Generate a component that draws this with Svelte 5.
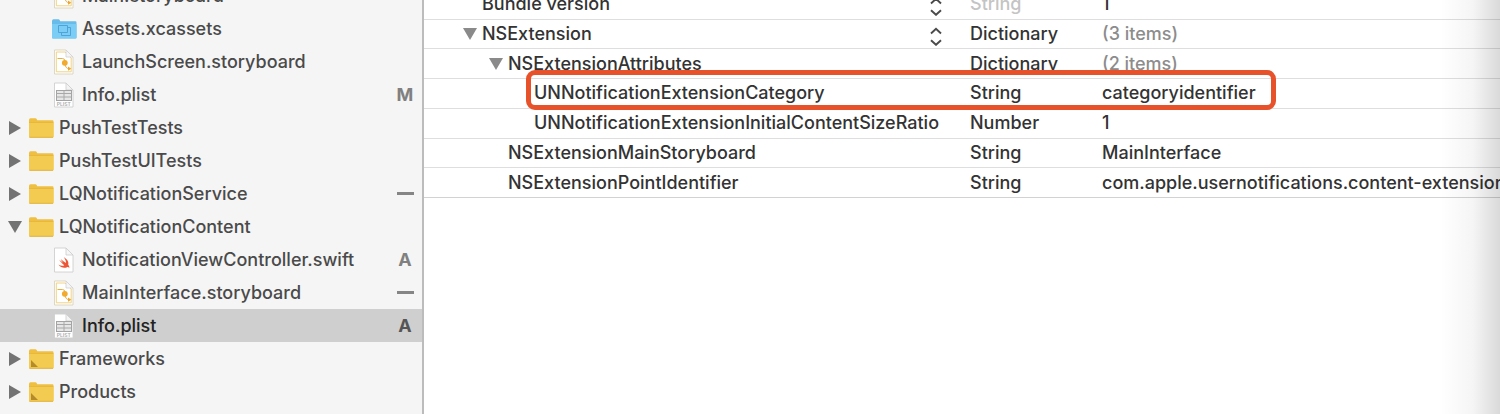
<script lang="ts">
  type FileKind = "storyboard" | "assets" | "plist" | "swift" | "folder" | "group";

  interface FileNode {
    name: string;
    kind: FileKind;
    status?: string;
    open?: boolean;
  }

  interface PlistRow {
    key: string;
    type: string;
    value: string;
    level: number;
    open?: boolean;
    stepper?: boolean;
    fixedType?: boolean;
  }

  let files: FileNode[] = [
    { name: "Main.storyboard", kind: "storyboard" },
    { name: "Assets.xcassets", kind: "assets" },
    { name: "LaunchScreen.storyboard", kind: "storyboard" },
    { name: "Info.plist", kind: "plist", status: "M" },
    { name: "PushTestTests", kind: "folder" },
    { name: "PushTestUITests", kind: "folder" },
    { name: "LQNotificationService", kind: "folder", status: "-" },
    { name: "LQNotificationContent", kind: "folder", open: true },
    { name: "NotificationViewController.swift", kind: "swift", status: "A" },
    { name: "MainInterface.storyboard", kind: "storyboard", status: "-" },
    { name: "Info.plist", kind: "plist", status: "A" },
    { name: "Frameworks", kind: "group" },
    { name: "Products", kind: "group" },
  ];

  let rows: PlistRow[] = [
    { key: "Bundle version", type: "String", value: "1", level: 0, stepper: true, fixedType: true },
    { key: "NSExtension", type: "Dictionary", value: "(3 items)", level: 0, open: true, stepper: true },
    { key: "NSExtensionAttributes", type: "Dictionary", value: "(2 items)", level: 1, open: true },
    { key: "UNNotificationExtensionCategory", type: "String", value: "categoryidentifier", level: 2 },
    { key: "UNNotificationExtensionInitialContentSizeRatio", type: "Number", value: "1", level: 2 },
    { key: "NSExtensionMainStoryboard", type: "String", value: "MainInterface", level: 1 },
    { key: "NSExtensionPointIdentifier", type: "String", value: "com.apple.usernotifications.content-extension", level: 1 },
  ];

  let selected = 10;

  const isFolder = (kind: FileKind) => kind === "folder" || kind === "group";
</script>

<div class="window">
  <nav class="sidebar" aria-label="Project navigator">
    <ul class="tree">
      {#each files as file, i}
        <li class="node" class:child={!isFolder(file.kind)} class:selected={i === selected}>
          {#if isFolder(file.kind)}
            <button type="button" class="disclosure" aria-label="Toggle {file.name}" aria-expanded={!!file.open}>
              <svg width="14" height="14" viewBox="0 0 14 14">
                <path d={file.open ? "M0 1H14L7 13Z" : "M1 0V14L13 7Z"} fill="#737373" />
              </svg>
            </button>
          {/if}

          <button type="button" class="file" on:click={() => (selected = i)}>
            {#if isFolder(file.kind)}
              <svg class="icon" width="26" height="24" viewBox="0 0 26 24">
                <path d="M1 4Q1 2.2 2.5 2.2H7.5Q8.7 2.2 9.2 4.2H24.5Q25.5 4.2 25.5 5.4V20.5Q25.5 21.5 24.5 21.5H2Q1 21.5 1 20.5Z" fill="#efbf3f" />
                <path d="M1 7H25.5V20.5Q25.5 21.5 24.5 21.5H2Q1 21.5 1 20.5Z" fill="#f3cb50" />
                <path d="M1 6.5H25.5" stroke="#e8b53c" stroke-width="0.8" />
                <path d="M1.5 21.3H25" stroke="#dcae3e" stroke-width="0.8" />
                {#if file.kind === "group"}
                  <path d="M3 13L10 20H3Z" fill="#b58a2a" />
                {/if}
              </svg>
            {:else if file.kind === "assets"}
              <svg class="icon" width="26" height="24" viewBox="0 0 26 24">
                <path d="M1 4Q1 2.2 2.5 2.2H7.5Q8.7 2.2 9.2 4.2H24.5Q25.5 4.2 25.5 5.4V20.5Q25.5 21.5 24.5 21.5H2Q1 21.5 1 20.5Z" fill="#68bce9" />
                <path d="M1 7H25.5V20.5Q25.5 21.5 24.5 21.5H2Q1 21.5 1 20.5Z" fill="#7bcdf6" />
                <g fill="none" stroke="#4fa3d6">
                  <path d="M7.5 8.5H16.5V15.5H7.5Z" />
                  <path d="M16.5 10.5H19.5V18.5H10.5V15.5" />
                </g>
              </svg>
            {:else}
              <svg class="icon" width="26" height="26" viewBox="0 0 26 26">
                <path d="M3.5 1H15L22 8V25H3.5Z" fill="#fff" stroke={file.kind === "storyboard" ? "#ddd3b8" : "#cfcfcf"} stroke-width="0.9" />
                {#if file.kind === "storyboard"}
                  <path d="M5.3 3H14L20.2 9V22.8H5.3Z" fill="none" stroke="#f0d283" />
                  <path d="M15 1V8H22Z" fill="#f6f6f6" stroke="#d2d2d2" stroke-width="0.8" />
                  <path d="M6.5 9.5H11.5Q14 9.5 14 12.5V15Q14.5 19.5 18 19.7" fill="none" stroke="#e9ad40" />
                  <circle cx="13.8" cy="13.8" r="2.9" fill="#f1aa2c" />
                  <path d="M17 17.6L20.3 19.8L17 21.8Z" fill="#e9a636" />
                {:else if file.kind === "plist"}
                  <path d="M15 1V8H22Z" fill="#f3f3f3" stroke="#cdcdcd" stroke-width="0.8" />
                  <rect x="5.5" y="8.5" width="15" height="10" fill="#e6e6e6" stroke="#a3a3a3" />
                  <path d="M5.5 11.5H20.5M5.5 15H20.5M13 8.5V18.5" stroke="#a8a8a8" />
                  <text x="12.8" y="23.6" class="badge">PLIST</text>
                {:else}
                  <path d="M15 1V8H22Z" fill="#f6f6f6" stroke="#cdcdcd" stroke-width="0.8" />
                  <path d="M12.8 10.2C16.4 12.2 18.1 15.3 17.2 17.7C18.4 19.1 18.5 20.2 18.2 21C17.4 19.9 16.6 20 15.6 20.4C12.6 21.5 9.3 20.2 7.5 17.5C9.5 18.9 11.7 19.2 13.3 18.2C11.2 16.6 9.4 14.6 8.2 12.8C9.9 14.2 11.3 15.1 12.4 15.8C11.4 14.7 10.3 13.2 9.7 12C11.6 13.7 13.3 15 14.9 16C15.3 14.2 14.2 12 12.8 10.2Z" fill="#ec5636" />
                {/if}
              </svg>
            {/if}
            <span>{file.name}</span>
          </button>

          {#if file.status === "-"}
            <span class="dash" role="img" aria-label="Contains changes"></span>
          {:else if file.status}
            <span class="status">{file.status}</span>
          {/if}
        </li>
      {/each}
    </ul>
  </nav>

  <main class="editor">
    <table class="plist">
      <colgroup>
        <col class="col-key" />
        <col class="col-type" />
        <col />
      </colgroup>
      <tbody>
        {#each rows as row}
          <tr>
            <td>
              <div class="key level-{row.level}">
                <span class="arrow">
                  {#if row.open}
                    <button type="button" class="disclosure" aria-label="Toggle {row.key}" aria-expanded="true">
                      <svg width="14" height="14" viewBox="0 0 14 14">
                        <path d="M0 1H14L7 13Z" fill="#8a8a8a" />
                      </svg>
                    </button>
                  {/if}
                </span>
                <span class="name">{row.key}</span>
                {#if row.stepper}
                  <button type="button" class="stepper" aria-label="Change key {row.key}">
                    <svg width="12" height="24" viewBox="0 0 12 24">
                      <path d="M1 11.5L6 6.8L11 11.5M1 18.2L6 22.8L11 18.2" fill="none" stroke="#4a4a4a" stroke-width="1.9" />
                    </svg>
                  </button>
                {/if}
              </div>
            </td>
            <td class:faded={row.fixedType}>{row.type}</td>
            <td class:muted={row.type === "Dictionary"}>{row.value}</td>
          </tr>
        {/each}
      </tbody>
    </table>
    <div class="highlight"></div>
    <div class="edge"></div>
  </main>
</div>

<style>
  :global(body) {
    background: #fff;
    overflow: hidden;
  }

  .window {
    display: flex;
    height: 100vh;
    overflow: hidden;
    font-family: Inter, "Liberation Sans", sans-serif;
    font-size: 18px;
    font-weight: 450;
    line-height: 24px;
    color: #333;
  }

  button {
    margin: 0;
    padding: 0;
    border: none;
    background: none;
    color: inherit;
    font: inherit;
    cursor: pointer;
  }

  svg {
    display: block;
  }

  /* Navigator */
  .sidebar {
    flex: 0 0 424px;
    box-sizing: border-box;
    overflow: hidden;
    background: #f5f5f5;
    border-right: 2px solid #bcbcbc;
    color: #4a4a4a;
  }

  /* scrolled so the first row is cut by the top edge */
  .tree {
    list-style: none;
    margin: -21px 0 0;
    padding: 0;
  }

  .node {
    display: flex;
    align-items: center;
    box-sizing: border-box;
    height: 33px;
    padding: 0 8px;
  }
  .node.child {
    padding-left: 51px;
  }
  .node.selected {
    background: #cfcfcf;
    color: #222;
  }

  .disclosure {
    display: block;
    width: 14px;
  }
  .node .disclosure {
    margin-right: 6px;
  }

  .file {
    display: flex;
    align-items: center;
    flex: 1;
    gap: 5px;
    text-align: left;
    white-space: nowrap;
  }

  .icon {
    flex: none;
  }

  .badge {
    font: 600 5px Inter, sans-serif;
    text-anchor: middle;
    fill: #aaa;
  }

  .status {
    width: 18px;
    text-align: center;
    font-weight: 700;
    color: #808080;
  }
  .selected .status {
    color: #555;
  }

  .dash {
    width: 17px;
    height: 3px;
    background: #858585;
  }

  /* Property list */
  .editor {
    position: relative;
    flex: 1;
    min-width: 0;
    overflow: hidden;
  }

  .plist {
    width: 100%;
    height: 208px;
    margin-top: -10px;
    table-layout: fixed;
    border-collapse: collapse;
  }
  .col-key { width: 546px; }
  .col-type { width: 132px; }

  td {
    padding: 0;
    border-bottom: 1px solid #dedede;
    white-space: nowrap;
    overflow: hidden;
  }
  tr:last-child td {
    border-bottom-color: #d2d2d2;
  }

  .key {
    display: flex;
    align-items: center;
    padding-right: 28px;
  }
  .level-0 { padding-left: 39px; }
  .level-1 { padding-left: 65px; }
  .level-2 { padding-left: 91px; }

  .arrow {
    flex: 0 0 19px;
  }

  .name {
    flex: 1;
  }

  .faded { color: #c4c4c4; }
  .muted { color: #8c8c8c; }

  .highlight {
    position: absolute;
    top: 70px;
    left: 102px;
    box-sizing: border-box;
    width: 750px;
    height: 40px;
    border: 5px solid #e8522a;
    border-radius: 9px;
    pointer-events: none;
  }

  /* shadow cast by the inspector on the right */
  .edge {
    position: absolute;
    inset: 0 0 0 auto;
    width: 60px;
    background: linear-gradient(to right, transparent, rgba(0, 0, 0, 0.04) 55%, rgba(0, 0, 0, 0.15));
    pointer-events: none;
  }
</style>
